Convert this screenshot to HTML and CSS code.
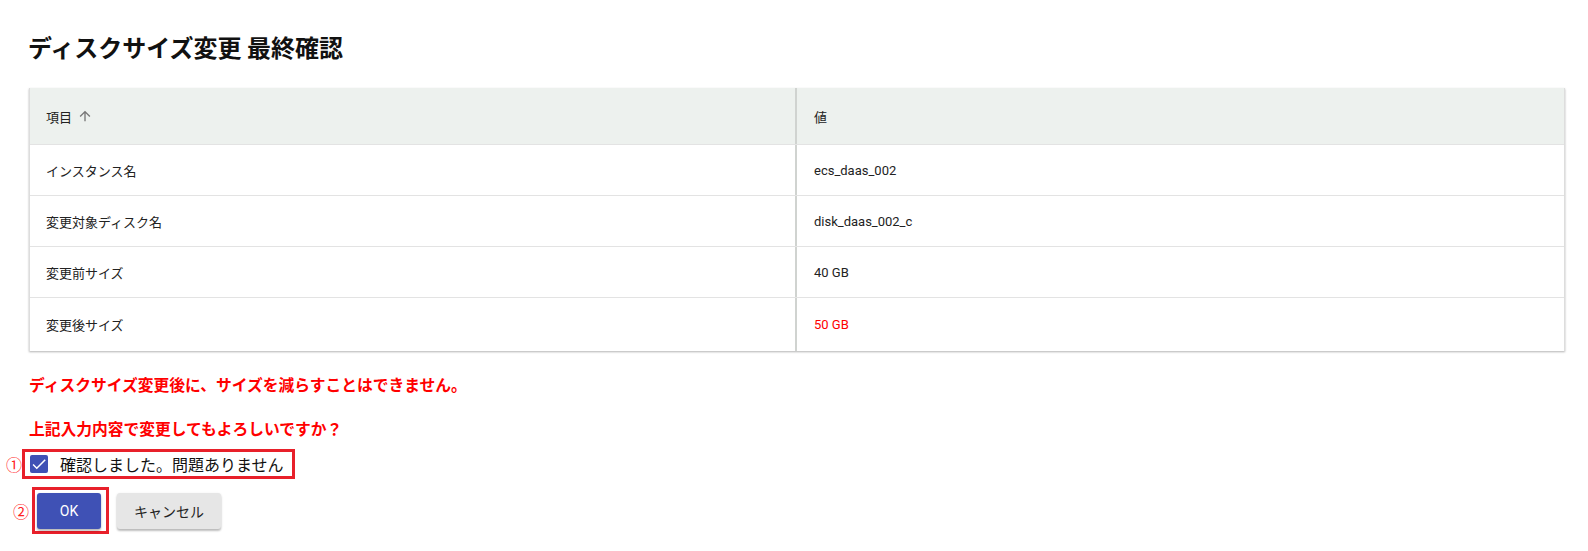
FILE: index.html
```html
<!DOCTYPE html>
<html lang="ja">
<head>
<meta charset="utf-8">
<title>ディスクサイズ変更 最終確認</title>
<link rel="stylesheet" href="styles.css">
</head>
<body>
<div class="page">
  <h1 class="title">ディスクサイズ変更 最終確認</h1>
  <div class="card">
    <div class="row head">
      <div class="cell c1">項目
        <svg class="sort" viewBox="0 0 24 24" width="16" height="16"><path d="M4 12l1.41 1.41L11 7.83V20h2V7.83l5.58 5.59L20 12l-8-8-8 8z" fill="#777"/></svg>
      </div>
      <div class="cell c2">値</div>
    </div>
    <div class="row"><div class="cell c1">インスタンス名</div><div class="cell c2">ecs_daas_002</div></div>
    <div class="row"><div class="cell c1">変更対象ディスク名</div><div class="cell c2">disk_daas_002_c</div></div>
    <div class="row"><div class="cell c1">変更前サイズ</div><div class="cell c2">40 GB</div></div>
    <div class="row last"><div class="cell c1">変更後サイズ</div><div class="cell c2 red">50 GB</div></div>
  </div>
  <p class="warn w1">ディスクサイズ変更後に、サイズを減らすことはできません。</p>
  <p class="warn w2">上記入力内容で変更してもよろしいですか？</p>
  <div class="anno-row r1">
    <span class="num">①</span>
    <label class="box box1">
      <span class="check"><svg viewBox="0 0 24 24" width="18" height="18"><path d="M9 16.17L4.83 12l-1.42 1.41L9 19 21 7l-1.41-1.41z" fill="#fff"/></svg></span>
      <span class="label">確認しました。問題ありません</span>
    </label>
  </div>
  <div class="anno-row r2">
    <span class="num n2">②</span>
    <span class="box box2"><button class="btn ok">OK</button></span>
    <button class="btn cancel">キャンセル</button>
  </div>
</div>
</body>
</html>
```

FILE: styles.css
```css
* { box-sizing: border-box; }
body {
  margin: 0;
  background: #fff;
  font-family: Roboto, "Noto Sans CJK JP", sans-serif;
  color: #222;
}
.page {
  padding: 0 23px 0 29px;
}
.title {
  margin: 31px 0 25px -1px;
  font-size: 24px;
  line-height: 32px;
  font-weight: 700;
  color: #111;
  font-family: "Noto Sans CJK JP", sans-serif;
}
.card {
  background: #fff;
  border-left: 1px solid #ddd;
  border-right: 1px solid #ddd;
  box-shadow: 0 1px 2px rgba(0,0,0,0.3);
}
.row {
  display: flex;
  height: 51px;
  border-bottom: 1px solid #e3e3e3;
  font-size: 13px;
}
.row.head {
  height: 57px;
  background: #edf1ee;
}
.row.last { border-bottom: none; height: 53px; }
.cell {
  display: flex;
  align-items: center;
  padding-left: 16px;
}
.c1 {
  width: 767px;
  border-right: 2px solid #d0d3d0;
  gap: 4px;
}
.c2 { flex: 1; padding-left: 17px; }
.red { color: #f00; }
.sort { margin-left: 1px; }
.warn {
  margin: 0;
  color: #f00;
  font-weight: 700;
  font-size: 15.75px;
  line-height: 20px;
  font-family: "Noto Sans CJK JP", sans-serif;
}
.w1 { margin-top: 24px; }
.w2 { margin-top: 24px; }
.anno-row {
  display: flex;
  align-items: center;
  margin-left: -23px;
}
.r1 { margin-top: 10px; }
.r2 { margin-top: 8px; }
.num {
  color: #f22;
  font-size: 16px;
  width: 16px;
  font-family: "Noto Sans CJK JP", sans-serif;
}
.n2 { margin-left: 7px; width: 19px; }
.box {
  border: 3px solid #e8202a;
  display: flex;
  align-items: center;
}
.box1 {
  height: 30px;
  width: 273px;
  padding-left: 5px;
}
.check {
  width: 18px;
  height: 18px;
  background: #3f51b5;
  border-radius: 2px;
  display: flex;
  align-items: center;
  justify-content: center;
}
.label {
  margin-left: 12px;
  font-size: 16px;
  color: #111;
  font-family: "Noto Sans CJK JP", sans-serif;
}
.box2 {
  width: 77px;
  height: 47px;
  padding: 2px;
}
.btn {
  border: none;
  border-radius: 3px;
  height: 36px;
  font-size: 14px;
  font-weight: 400;
  font-family: Roboto, "Noto Sans CJK JP", sans-serif;
  box-shadow: 0 2px 2px rgba(0,0,0,0.2), 0 1px 3px rgba(0,0,0,0.12);
  cursor: pointer;
}
.ok {
  width: 64px;
  background: #3f51b5;
  color: #fff;
}
.cancel {
  margin-left: 8px;
  width: 104px;
  background: #e6e6e6;
  color: #222;
}
```
